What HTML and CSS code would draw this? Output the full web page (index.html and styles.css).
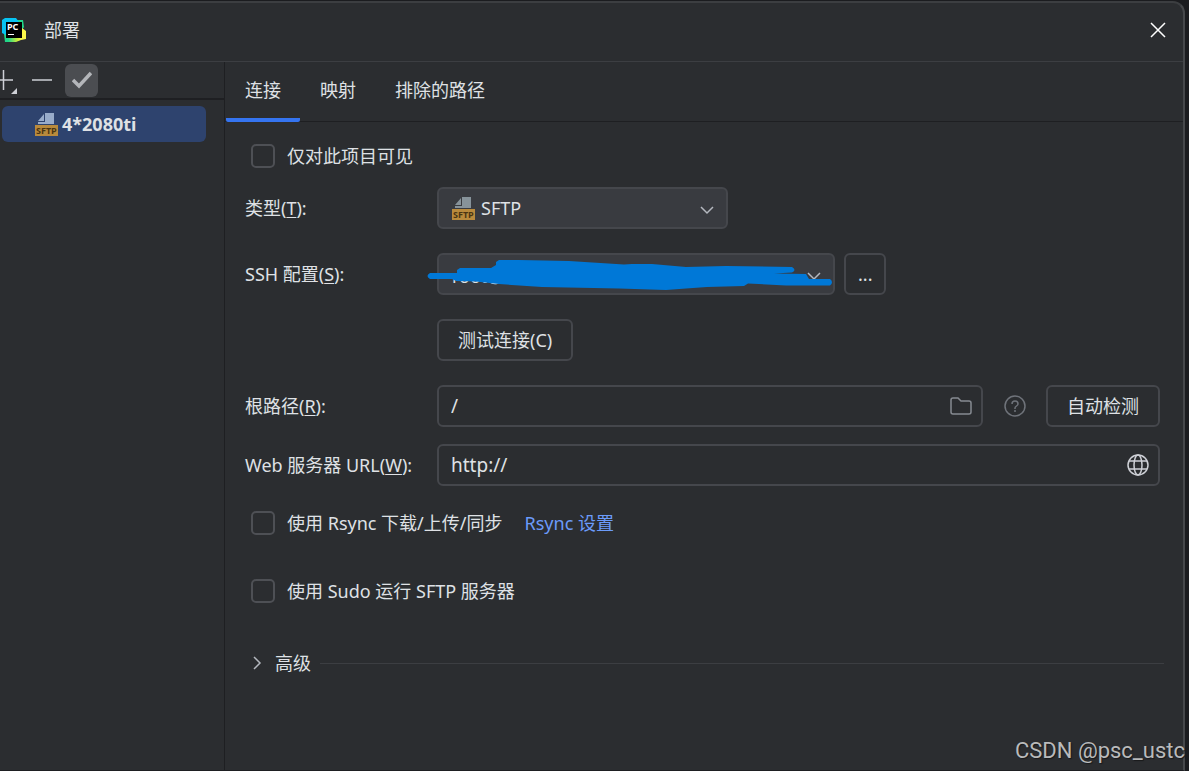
FILE: index.html
```html
<!DOCTYPE html>
<html lang="zh-CN">
<head>
    <meta charset="UTF-8">
    <meta name="viewport" content="width=device-width, initial-scale=1.0">
    <title>部署</title>
    <link rel="stylesheet" href="styles.css">
</head>
<body>

    <div class="dialog">
        <header class="title-bar">
            <svg class="app-logo" viewBox="0 0 24 24">
                <defs>
                    <linearGradient id="logoGreen" x1="0" y1="0" x2="1" y2="0">
                        <stop offset="0.2" stop-color="#21d789"/>
                        <stop offset="0.6" stop-color="#c9ec3c"/>
                        <stop offset="0.8" stop-color="#fcf84a"/>
                    </linearGradient>
                </defs>
                <path d="M15 2H21L22 9L20 12H15Z" fill="#21d789"/>
                <path d="M20 10L24 13V21L19 22L14 24H3L2 16Z" fill="url(#logoGreen)"/>
                <path d="M0 2L3 0H14L17 4L4 17L0 15Z" fill="#07c3f2"/>
                <rect x="4" y="4" width="16" height="16" fill="#000"/>
                <text x="5" y="12" font-size="9">PC</text>
                <rect x="6" y="16" width="6" height="1" fill="#fff"/>
            </svg>
            <h1>部署</h1>
            <button type="button" class="icon-btn close-btn" aria-label="关闭">
                <svg width="16" height="16" viewBox="0 0 16 16"><path d="M1 1L15 15M15 1L1 15" stroke="#fff" stroke-width="1.5"/></svg>
            </button>
        </header>

        <div class="dialog-body">
            <aside class="sidebar">
                <div class="toolbar">
                    <button type="button" class="icon-btn add-btn" aria-label="添加">
                        <svg width="17" height="26" viewBox="0 0 17 26">
                            <path d="M3.5 3V23M0 13H13" stroke="#ced0d6" stroke-width="1.5"/>
                            <path d="M17 21V27H11Z" fill="#ced0d6"/>
                        </svg>
                    </button>
                    <button type="button" class="icon-btn" aria-label="移除">
                        <svg width="20" height="20" viewBox="0 0 20 20"><path d="M0 10H20" stroke="#ced0d6" stroke-width="1.5"/></svg>
                    </button>
                    <button type="button" class="icon-btn default-btn" aria-label="设为默认">
                        <svg width="20" height="18" viewBox="0 0 20 18"><path d="M1 9L7 15L19 2" fill="none" stroke="#b4b6ba" stroke-width="3.5"/></svg>
                    </button>
                </div>
                <a href="#" class="server-item">
                    <svg class="sftp-icon selected" viewBox="0 0 23 23">
                        <path d="M3 8L9 1V8Z M10 0H19V11H3V9H10Z"/>
                        <rect y="12" width="23" height="11" fill="#b98a3c"/>
                        <text x="1" y="21" font-size="9">SFTP</text>
                    </svg>
                    4*2080ti
                </a>
            </aside>

            <main class="content">
                <nav class="tabs">
                    <a href="#" class="tab active">连接</a>
                    <a href="#" class="tab">映射</a>
                    <a href="#" class="tab">排除的路径</a>
                </nav>

                <form class="settings">
                    <label class="check-row">
                        <input type="checkbox">
                        仅对此项目可见
                    </label>

                    <div class="fields">
                        <label for="type">类型(<u>T</u>):</label>
                        <div class="controls">
                            <div class="select-box type-select">
                                <svg class="sftp-icon" viewBox="0 0 23 23">
                                    <path d="M3 8L9 1V8Z M10 0H19V11H3V9H10Z"/>
                                    <rect y="12" width="23" height="11" fill="#b98a3c"/>
                                    <text x="1" y="21" font-size="9">SFTP</text>
                                </svg>
                                <select id="type"><option>SFTP</option></select>
                                <svg class="chevron" viewBox="0 0 14 14"><path d="M1 4L7 10L13 4"/></svg>
                            </div>
                        </div>

                        <label for="sshConfig">SSH 配置(<u>S</u>):</label>
                        <div class="controls">
                            <div class="select-box ssh-select">
                                <select id="sshConfig"><option>root@</option></select>
                                <svg class="chevron" viewBox="0 0 14 14"><path d="M1 4L7 10L13 4"/></svg>
                                <!-- Marker stroke hiding the host -->
                                <svg class="marker" viewBox="0 0 406 34">
                                    <path d="M3 15H30L30 12L33 10L64 10L69 7L69 4L72 2L92 2L142 3L197 6.5L205 6L225 6L259 9L299 8L365 9Q370 12 365 14.5L347 15.5L379 16L382 21L403 21Q407 24 403 27.5L359 27.5L321 25.5L317 28L280 29L259 30.5L239 32L192 30.5L115 29L72 26L49 23.5L29 23L25 21H3Q-2 18 3 15Z" fill="#0078d7"/>
                                </svg>
                            </div>
                            <button type="button" class="btn more-btn" aria-label="浏览 SSH 配置">...</button>
                        </div>

                        <div class="controls test-controls">
                            <button type="button" class="btn">测试连接(C)</button>
                        </div>

                        <label for="rootPath">根路径(<u>R</u>):</label>
                        <div class="controls">
                            <div class="text-box">
                                <input type="text" id="rootPath" value="/">
                                <button type="button" class="icon-btn" aria-label="浏览">
                                    <svg width="22" height="20" viewBox="0 0 22 20"><path d="M1 4Q1 2 3 2H8L11 5H19Q21 5 21 7V16Q21 18 19 18H3Q1 18 1 16Z" fill="none" stroke="#868a91" stroke-width="1.5"/></svg>
                                </button>
                            </div>
                            <button type="button" class="icon-btn help-btn" aria-label="帮助">
                                <svg width="22" height="22" viewBox="0 0 22 22" fill="none" stroke="#6f737a" stroke-width="1.5">
                                    <circle cx="11" cy="11" r="10"/>
                                    <path d="M8 9Q8 6 11 6T14 9C14 11 11 11 11 13V14M11 15V17"/>
                                </svg>
                            </button>
                            <button type="button" class="btn">自动检测</button>
                        </div>
                    </div>

                    <div class="fields url-field">
                        <label for="webUrl">Web 服务器 URL(<u>W</u>):</label>
                        <div class="controls">
                            <div class="text-box">
                                <input type="text" id="webUrl" value="http://">
                                <button type="button" class="icon-btn" aria-label="在浏览器中打开">
                                    <svg width="22" height="22" viewBox="0 0 22 22" fill="none" stroke="#ced0d6" stroke-width="1.5">
                                        <circle cx="11" cy="11" r="10"/>
                                        <ellipse cx="11" cy="11" rx="4" ry="10"/>
                                        <path d="M2 7H20M2 15H20"/>
                                    </svg>
                                </button>
                            </div>
                        </div>
                    </div>

                    <div class="option-row">
                        <label class="check-row">
                            <input type="checkbox">
                            使用 Rsync 下载/上传/同步
                        </label>
                        <a href="#">Rsync 设置</a>
                    </div>
                    <div class="option-row sudo-row">
                        <label class="check-row">
                            <input type="checkbox">
                            使用 Sudo 运行 SFTP 服务器
                        </label>
                    </div>

                    <button type="button" class="advanced" aria-expanded="false">
                        <svg class="chevron" viewBox="0 0 14 14"><path d="M4 1L10 7L4 13"/></svg>
                        <span>高级</span>
                    </button>
                </form>
            </main>
        </div>
    </div>

    <div class="watermark">CSDN @psc_ustc</div>

</body>
</html>
```
FILE: styles.css
```css
* {
    box-sizing: border-box;
}

body {
    margin: 0;
    padding: 1px 4px 0 0;
    min-height: 100vh;
    display: flex;
    background-color: #1b1c1f;
    color: #dfe1e5;
    font-family: "Noto Sans", "Noto Sans CJK SC", sans-serif;
    font-size: 18px;
    line-height: 24px;
}

button, input, select {
    margin: 0;
    font: inherit;
    color: inherit;
}

a {
    color: inherit;
    text-decoration: none;
}

u {
    text-underline-offset: 2px;
}

.dialog {
    flex: 1;
    display: flex;
    flex-direction: column;
    background-color: #2b2d30;
    border-top: 2px solid #3c3e41;
    border-right: 2px solid #46484b;
    border-bottom: 1px solid #1e1f22;
    border-top-right-radius: 12px;
}

/* Title bar */
.title-bar {
    height: 59px;
    display: flex;
    align-items: center;
    padding: 0 17px 4px 2px;
    border-bottom: 1px solid #3c3e42;
}

.title-bar h1 {
    flex: 1;
    margin: 0 0 0 18px;
    font-size: 18px;
    font-weight: 400;
}

.app-logo {
    width: 24px;
    height: 24px;
}

.app-logo text {
    fill: #fff;
    font-weight: 700;
}

.icon-btn {
    display: flex;
    align-items: center;
    justify-content: center;
    padding: 0;
    border: none;
    background: none;
    cursor: pointer;
}

.dialog-body {
    flex: 1;
    display: flex;
}

/* Server list */
.sidebar {
    width: 225px;
    border-right: 1px solid #1e1f22;
}

.toolbar {
    height: 38px;
    display: flex;
    align-items: center;
    gap: 15px;
    border-bottom: 2px solid #1e1f22;
}

.add-btn svg {
    overflow: visible;
}

.default-btn {
    width: 33px;
    height: 33px;
    margin-left: -2px;
    border-radius: 6px;
    background-color: #4b4d51;
}

.server-item {
    height: 36px;
    margin: 6px 18px 0 2px;
    padding-left: 33px;
    display: flex;
    align-items: center;
    gap: 4px;
    border-radius: 6px;
    background-color: #2e436e;
    font-weight: 700;
}

.sftp-icon {
    width: 23px;
    height: 23px;
    fill: #87939a;
}

.sftp-icon.selected {
    fill: #98acca;
}

.sftp-icon text {
    fill: #4a3512;
    font-family: "Open Sans", sans-serif;
    font-weight: 700;
}

/* Tabs */
.content {
    flex: 1;
    min-width: 0;
}

.tabs {
    height: 60px;
    display: flex;
    gap: 1px;
    padding-left: 1px;
    border-bottom: 1px solid #1e1f22;
}

.tab {
    height: 60px;
    padding: 16px 19px 0;
    border-bottom: 4px solid transparent;
    border-radius: 2px;
}

.tab.active {
    border-bottom-color: #3574f0;
}

/* Connection form */
.settings {
    padding: 22px 23px 0 20px;
}

.check-row {
    display: flex;
    align-items: center;
    gap: 12px;
    padding-left: 6px;
}

.check-row input {
    appearance: none;
    width: 24px;
    height: 24px;
    border: 2px solid #4e5055;
    border-radius: 5px;
}

.check-row input:checked {
    background-color: #3574f0;
}

.fields {
    display: grid;
    grid-template-columns: 192px 1fr;
    align-items: center;
    row-gap: 24px;
    margin-top: 19px;
}

.url-field {
    margin-top: 17px;
}

.controls {
    display: flex;
    align-items: center;
    gap: 9px;
}

.test-controls {
    grid-column: 2;
}

.btn, .text-box, .select-box {
    height: 42px;
    border: 2px solid #45474c;
    border-radius: 6px;
    background-color: #2b2d30;
}

.btn {
    padding: 0 19px;
    cursor: pointer;
}

.more-btn {
    padding: 0 12px;
}

.select-box {
    position: relative;
    background-color: #393b40;
}

.type-select {
    width: 291px;
}

.ssh-select {
    width: 398px;
}

.select-box select {
    appearance: none;
    width: 100%;
    height: 100%;
    padding: 0 36px 0 13px;
    border: none;
    background: none;
}

.type-select select {
    padding-left: 42px;
}

.ssh-select select {
    padding-top: 4px;
}

.select-box .sftp-icon {
    position: absolute;
    left: 13px;
    top: 8px;
}

.select-box .chevron {
    position: absolute;
    right: 12px;
    top: 14px;
    pointer-events: none;
}

.chevron {
    width: 14px;
    height: 14px;
    fill: none;
    stroke: #b4b8bf;
    stroke-width: 1.5px;
}

.marker {
    position: absolute;
    left: -12px;
    top: 3px;
    width: 406px;
    height: 34px;
    overflow: visible;
    pointer-events: none;
}

.text-box {
    flex: 1;
    display: flex;
    align-items: center;
    padding: 0 9px 0 12px;
}

.text-box input {
    flex: 1;
    min-width: 0;
    padding: 0;
    border: none;
    outline: none;
    background: none;
    font-size: 19px;
}

.help-btn {
    margin: 0 11px 0 12px;
}

.option-row {
    display: flex;
    gap: 22px;
    margin-top: 25px;
}

.option-row a {
    color: #6b9bfa;
}

.sudo-row {
    margin-top: 44px;
}

.advanced {
    width: 100%;
    display: flex;
    align-items: center;
    gap: 9px;
    margin-top: 48px;
    padding: 0 0 0 5px;
    border: none;
    background: none;
    cursor: pointer;
}

.advanced span {
    margin-left: 2px;
}

.advanced::after {
    content: "";
    flex: 1;
    height: 1px;
    margin-right: -4px;
    background-color: #3c3e42;
}

.watermark {
    position: absolute;
    right: 4px;
    bottom: 8px;
    color: #b9babb;
    font-family: Roboto, sans-serif;
    font-size: 22px;
    text-shadow: 1px 1px 1px #18191b;
}
```
